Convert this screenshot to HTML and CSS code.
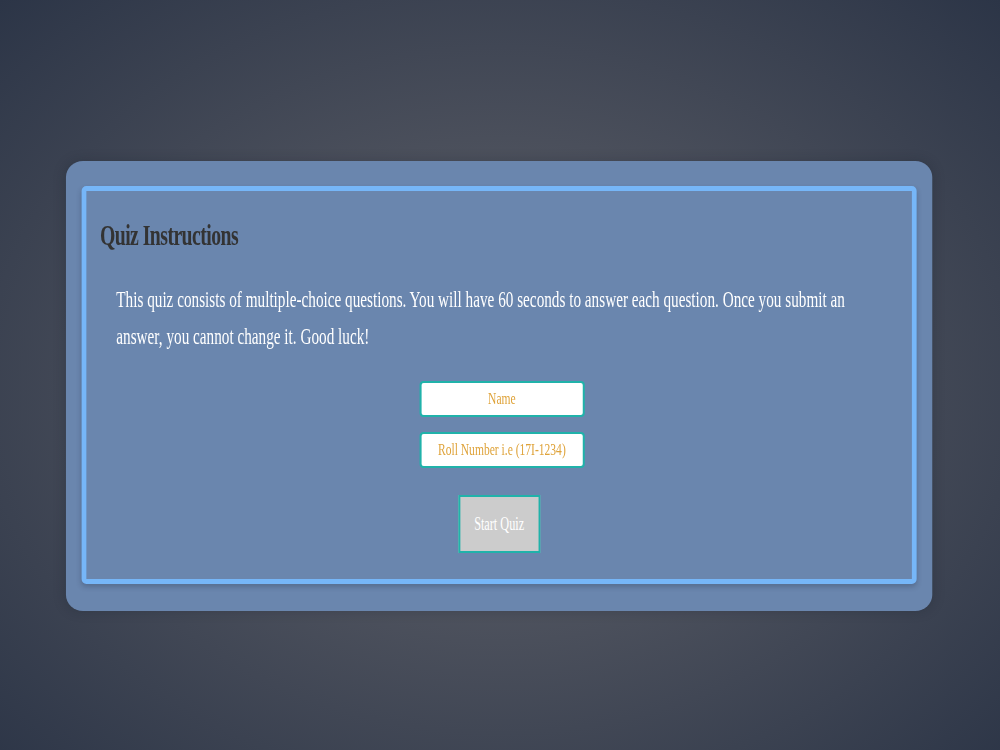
FILE: index.html
```html
<!DOCTYPE html>
<html lang="en">
<head>
<meta charset="utf-8">
<title>Quiz Instructions</title>
<link rel="stylesheet" href="styles.css">
</head>
<body>
<main class="viewport">
  <div class="stage">
    <div class="card">
      <section class="panel">
        <h2 class="panel-title">Quiz Instructions</h2>
        <p class="panel-text">This quiz consists of multiple-choice questions. You will have 60 seconds to answer each question. Once you submit an answer, you cannot change it. Good luck!</p>
        <form class="entry">
          <input class="field" type="text" placeholder="Name">
          <input class="field field-roll" type="text" placeholder="Roll Number i.e (17I-1234)">
          <button class="start" type="button">Start Quiz</button>
        </form>
      </section>
    </div>
  </div>
</main>
</body>
</html>
```
FILE: styles.css
```css
html, body {
  margin: 0;
  height: 100%;
  overflow: hidden;
}

body {
  min-height: 750px;
  background: radial-gradient(ellipse at 50% 52%, #62646b 0%, #50545f 35%, #2c3547 100%);
  font-family: "Liberation Serif", "Times New Roman", serif;
}

.viewport {
  width: 100%;
  height: 750px;
  overflow: hidden;
}

/* the page is drawn in a narrow, tall type: the stage is condensed horizontally */
.stage {
  width: 1470px;
  padding-top: 161px;
  transform: scaleX(0.68);
  transform-origin: 0 0;
}

.card {
  box-sizing: border-box;
  margin-left: 97px;
  width: 1274px;
  height: 450px;
  padding: 25px 23px 27px;
  background: #6a86ae;
  border-radius: 25px / 16px;
  box-shadow: 0 0 14px rgba(20, 26, 38, 0.25);
}

.panel {
  box-sizing: border-box;
  height: 398px;
  padding: 27px 20px 0;
  background: #6a86ae;
  border-style: solid;
  border-color: #76b6f8;
  border-width: 5px 7px;
  border-radius: 7px / 5px;
  box-shadow: 0 3px 6px rgba(30, 40, 60, 0.25);
}

.panel-title {
  margin: 0;
  font-size: 29px;
  line-height: 34px;
  font-weight: 700;
  letter-spacing: -0.8px;
  color: #333;
}

.panel-text {
  margin: 29px 24px 0;
  font-size: 22.4px;
  line-height: 37px;
  color: #fff;
}

.entry {
  margin-top: 26px;
  display: flex;
  flex-direction: column;
  align-items: center;
}

.field {
  box-sizing: border-box;
  width: 243px;
  height: 36px;
  margin: 0 0 0 8px;
  padding: 0 6px;
  background: #fff;
  border-style: solid;
  border-color: #20b2aa;
  border-width: 2px 3px;
  border-radius: 6px / 4px;
  font-family: "Liberation Serif", "Times New Roman", serif;
  font-size: 17px;
  color: #dfa33a;
  text-align: center;
  outline: none;
}

.field::placeholder {
  color: #dfa33a;
  opacity: 1;
}

.field-roll {
  margin-top: 15px;
}

.start {
  box-sizing: border-box;
  margin-top: 27px;
  width: 121px;
  height: 58px;
  padding: 0;
  background: #cccccc;
  border-style: solid;
  border-color: #20b2aa;
  border-width: 2px 3px;
  border-radius: 0;
  font-family: "Liberation Serif", "Times New Roman", serif;
  font-size: 18px;
  color: #fff;
  cursor: pointer;
}
```
